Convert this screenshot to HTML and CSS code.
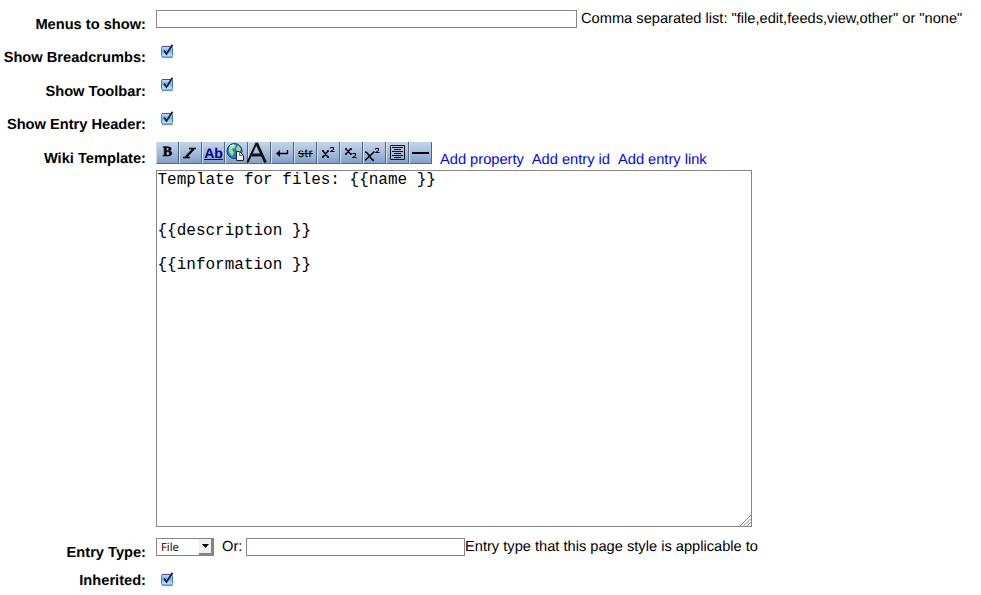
FILE: index.html
```html
<!DOCTYPE html>
<html lang="en">
<head>
<meta charset="utf-8">
<title>Page Style</title>
<link rel="stylesheet" href="styles.css">
</head>
<body>
<svg class="defs" width="0" height="0">
  <defs>
    <linearGradient id="box" x1="0" y1="0" x2="0" y2="1"><stop offset="0" stop-color="#d3e6f8"/><stop offset=".4" stop-color="#73b4ef"/><stop offset="1" stop-color="#b5f3ff"/></linearGradient>
    <symbol id="check" viewBox="0 0 13 15">
      <rect x="1" y="13" width="11" height="1.3" rx=".6" fill="#aaa"/>
      <rect x=".5" y="2.5" width="11" height="10.5" rx="1.5" fill="url(#box)" stroke="#4a7cae"/>
      <path d="M1 2.5h10" stroke="#5148a0"/>
      <path d="M3 6.5l2.500 3.500L11.500.7" fill="none" stroke="#172136" stroke-width="1.800"/>
    </symbol>
  </defs>
</svg>
<form class="form">
  <label class="label" for="menus">Menus to show:</label>
  <div class="field line"><input id="menus" class="text menus" type="text"><span class="hint">Comma separated list: "file,edit,feeds,view,other" or "none"</span></div>
  <span class="label">Show Breadcrumbs:</span>
  <div class="field"><svg class="check"><use href="#check"/></svg></div>
  <span class="label">Show Toolbar:</span>
  <div class="field"><svg class="check toolbar-check"><use href="#check"/></svg></div>
  <span class="label">Show Entry Header:</span>
  <div class="field"><svg class="check"><use href="#check"/></svg></div>
  <label class="label" for="wiki">Wiki Template:</label>
  <div class="field">
    <div class="tools">
      <span class="tool bold">B</span>
      <span class="tool"><svg viewBox="0 0 22 22"><path d="M9 6.500h7M3 15.500h7" fill="none" stroke="#000" stroke-width="1.300"/><path d="M13.500 7L6 15" fill="none" stroke="#000" stroke-width="2.400"/></svg></span>
      <span class="tool ab">Ab</span>
      <span class="tool"><svg viewBox="0 0 22 22"><circle cx="8.500" cy="9" r="7.500" fill="#1685d4" stroke="#073d70"/><path d="M3 5l4-3 3 1-1 3-3 1 2 4-2 3-3-4zM12 3l3 4-2 4-3-4z" fill="#a6dc80"/><path d="M4 4l4-1-3 3M10 12l2 2" stroke="#e5fbff" fill="none"/><path d="M10.500 9.500h3l4 4v5h-7z" fill="#eee" stroke="#222"/><path d="M13.500 9.500v4h4" fill="none" stroke="#777"/></svg></span>
      <span class="tool"><svg viewBox="0 0 22 22"><path d="M-1.500 20.500L7.500.8" fill="none" stroke="#111" stroke-width="2"/><path d="M7.500.8L16.500 20.500M3 13h10" fill="none" stroke="#111" stroke-width="2.800"/></svg></span>
      <span class="tool"><svg viewBox="0 0 22 22"><path d="M15.500 8v3.500H6" fill="none" stroke="#000" stroke-width="1.300"/><path d="M4 11.500l4-3.500v7z"/></svg></span>
      <span class="tool strike">str</span>
      <span class="tool"><svg viewBox="0 0 22 22"><path d="M5 9l5 6M10 9l-5 6M4 9h2M9 9h2M4 15h2M9 15h2" fill="none" stroke="#000" stroke-width="1.400"/><path d="M12.500 6.500v-1h3v2l-3 2h4" fill="none" stroke="#000"/></svg></span>
      <span class="tool"><svg viewBox="0 0 22 22"><path d="M5 7l4.500 5M9.500 7L5 12M4 7h2M9 7h2M4 12h2M9 12h2" fill="none" stroke="#000" stroke-width="1.400"/><path d="M11.500 11.500h3v2l-3 2h4" fill="none" stroke="#000"/></svg></span>
      <span class="tool"><svg viewBox="0 0 22 22"><path d="M1 10c4 0 5 8 9 8.500M10.500 9.500L1 18.500" fill="none" stroke="#000" stroke-width="1.600"/><path d="M11.500 7.500v-1h3v2l-3 2h4" fill="none" stroke="#000"/></svg></span>
      <span class="tool"><svg viewBox="0 0 22 22"><path d="M3.500 3.500h14v14h-14zM5 5.500h11M7 7.500h7M5 9.500h11M7 11.500h7M5 13.500h11M7 15.500h7" fill="none" stroke="#111"/></svg></span>
      <span class="tool"><svg viewBox="0 0 22 22"><path d="M2 11h17" stroke="#000" stroke-width="2"/></svg></span>
      <div class="links"><a href="#">Add property</a><a href="#">Add entry id</a><a href="#">Add entry link</a></div>
    </div>
    <div class="editor">
      <textarea id="wiki" spellcheck="false">Template for files: {{name }}


{{description }}

{{information }}</textarea>
      <svg class="grip" viewBox="0 0 12 12"><path d="M1 12L12 1M4.500 12L12 4.500M8 12l4-4" stroke="#888" fill="none"/></svg>
    </div>
  </div>
  <label class="label" for="type">Entry Type:</label>
  <div class="field line"><span class="select">File<span class="arrow"><svg viewBox="0 0 7 4"><path d="M0 0h7L3.500 4z"/></svg></span></span><span class="or">Or:</span><input id="type" class="text type" type="text"><span>Entry type that this page style is applicable to</span></div>
  <span class="label">Inherited:</span>
  <div class="field"><svg class="check last-check"><use href="#check"/></svg></div>
</form>
</body>
</html>
```
FILE: styles.css
```css
body {
  margin: 0;
  background: #fff;
  color: #000;
  font: 14.65px/20px "Liberation Sans", Arial, sans-serif;
  text-rendering: geometricPrecision;
}
.defs { position: absolute; }
.form {
  display: grid;
  grid-template-columns: 146px 825px;
  grid-template-rows: 33px 34px 33px 34px 394px 28px 28px;
  column-gap: 10px;
  padding-top: 9px;
}
.label {
  padding-top: 6px;
  font-weight: bold;
  text-align: right;
  white-space: nowrap;
}
.line {
  display: flex;
  align-items: flex-start;
  white-space: nowrap;
}
.text {
  box-sizing: border-box;
  height: 18px;
  margin: 1px 0 0;
  padding: 0 2px;
  border: 1px solid #858585;
  background: #fff;
}
.menus { width: 421px; }
.type { width: 219px; }
.hint { margin-left: 4px; }
.check {
  display: block;
  width: 13px;
  height: 15px;
  margin: 2px 0 0 5px;
}
.toolbar-check { margin-top: 1px; }
.last-check { margin-top: 7px; }
.tools {
  display: flex;
  height: 27px;
  margin-top: -1px;
}
.tool {
  box-sizing: border-box;
  width: 23px;
  height: 22px;
  border-right: 1px solid #52647c;
  border-left: 1px solid #d5e1f0;
  border-bottom: 1px solid #586b84;
  background: linear-gradient(#c5d5e9, #a5bddb 50%, #809fc7);
  text-align: center;
  line-height: 22px;
}
.tool svg {
  display: block;
  width: 22px;
  height: 22px;
  overflow: visible;
}
.bold {
  font: bold 14px/22px "Liberation Serif", serif;
  -webkit-text-stroke: 0.5px #000;
}
.ab {
  color: #00008b;
  font-weight: bold;
  font-size: 14px;
  text-decoration: underline;
}
.strike {
  font-size: 12px;
  letter-spacing: 0.5px;
  text-decoration: line-through;
}
.links {
  display: flex;
  gap: 8px;
  margin: 8px 0 0 8px;
  white-space: nowrap;
}
.links a { color: #00f; text-decoration: none; }
.editor {
  position: relative;
  width: 596px;
  height: 357px;
  margin-top: 1px;
}
.editor textarea {
  display: block;
  box-sizing: border-box;
  width: 100%;
  height: 100%;
  margin: 0;
  padding: 1px 0.5px 0;
  border: 1px solid #858585;
  resize: none;
  overflow: hidden;
  color: #000;
  font: 16px/17px "Liberation Mono", monospace;
}
.grip {
  position: absolute;
  right: 1px;
  bottom: 1px;
  width: 12px;
  height: 12px;
}
.select {
  display: flex;
  justify-content: space-between;
  box-sizing: border-box;
  width: 58px;
  height: 18px;
  margin-top: 1px;
  padding-left: 4px;
  border: 1px solid #858585;
  font: 11.3px/17px "Open Sans", sans-serif;
}
.arrow {
  display: flex;
  align-items: center;
  justify-content: center;
  box-sizing: border-box;
  width: 14px;
  height: 16px;
  border-right: 2px solid #858585;
  border-bottom: 2px solid #858585;
  background: #eee;
}
.arrow svg { width: 7px; height: 4px; }
.or { width: 24px; margin-left: 8px; }
```
